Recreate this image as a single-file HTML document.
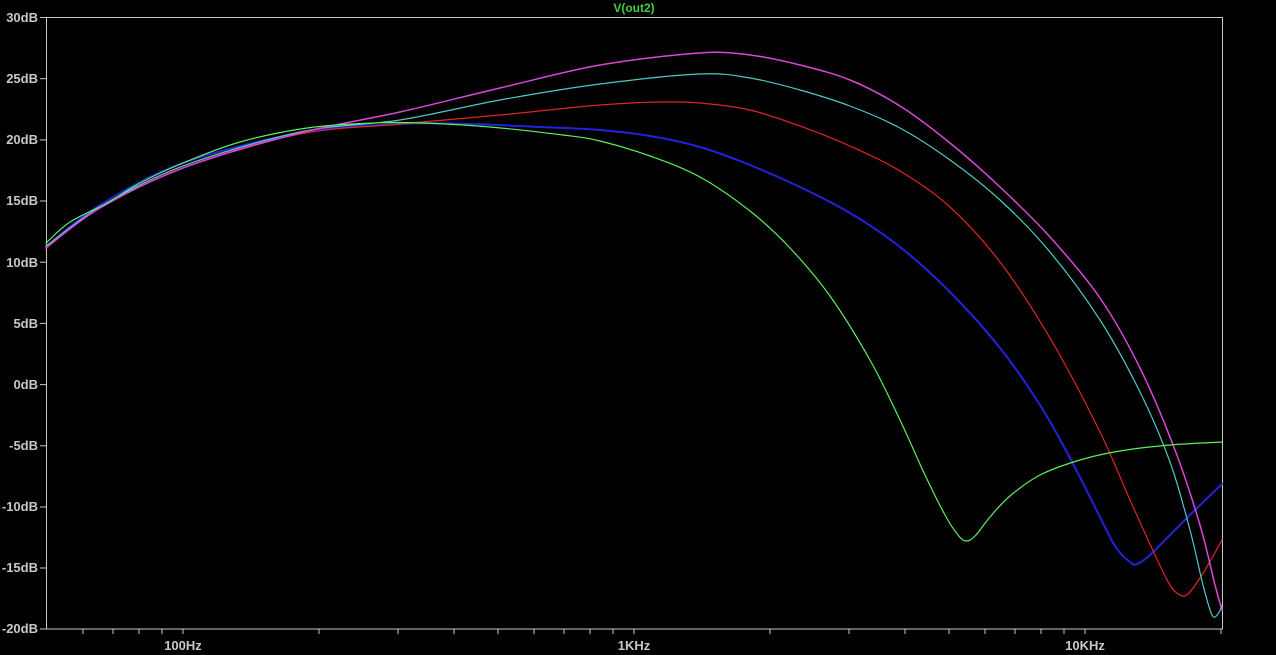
<!DOCTYPE html>
<html><head><meta charset="utf-8"><style>
html,body{margin:0;padding:0;background:#000;}
svg{display:block}
text{font-family:"Liberation Sans",sans-serif;font-size:13px;font-weight:bold;fill:#c8c8c8}
</style></head><body>
<svg id="s" width="1276" height="655" viewBox="0 0 1276 655" xmlns="http://www.w3.org/2000/svg">
<rect width="1276" height="655" fill="#000"/>
<text x="634" y="12" text-anchor="middle" style="fill:#3ecf3e;font-size:12px">V(out2)</text>
<rect x="46.5" y="17.5" width="1176" height="611.5" fill="none" stroke="#c8c8c8" stroke-width="1"/>
<g stroke="#c8c8c8" stroke-width="1">
<line x1="40" y1="17.5" x2="46" y2="17.5"/><line x1="40" y1="78.7" x2="46" y2="78.7"/><line x1="40" y1="139.9" x2="46" y2="139.9"/><line x1="40" y1="201" x2="46" y2="201"/><line x1="40" y1="262.2" x2="46" y2="262.2"/><line x1="40" y1="323.4" x2="46" y2="323.4"/><line x1="40" y1="384.6" x2="46" y2="384.6"/><line x1="40" y1="445.8" x2="46" y2="445.8"/><line x1="40" y1="507" x2="46" y2="507"/><line x1="40" y1="568" x2="46" y2="568"/><line x1="40" y1="629" x2="46" y2="629"/>
<line x1="83" y1="629" x2="83" y2="634"/><line x1="113" y1="629" x2="113" y2="634"/><line x1="139" y1="629" x2="139" y2="634"/><line x1="162" y1="629" x2="162" y2="634"/><line x1="183" y1="629" x2="183" y2="634"/>
<line x1="319" y1="629" x2="319" y2="634"/><line x1="398" y1="629" x2="398" y2="634"/><line x1="454" y1="629" x2="454" y2="634"/><line x1="498" y1="629" x2="498" y2="634"/><line x1="534" y1="629" x2="534" y2="634"/><line x1="564" y1="629" x2="564" y2="634"/><line x1="590" y1="629" x2="590" y2="634"/><line x1="613" y1="629" x2="613" y2="634"/><line x1="634" y1="629" x2="634" y2="634"/>
<line x1="770" y1="629" x2="770" y2="634"/><line x1="849" y1="629" x2="849" y2="634"/><line x1="905" y1="629" x2="905" y2="634"/><line x1="949" y1="629" x2="949" y2="634"/><line x1="985" y1="629" x2="985" y2="634"/><line x1="1015" y1="629" x2="1015" y2="634"/><line x1="1041" y1="629" x2="1041" y2="634"/><line x1="1064" y1="629" x2="1064" y2="634"/><line x1="1085" y1="629" x2="1085" y2="634"/><line x1="1221" y1="629" x2="1221" y2="634"/>
</g>
<g text-anchor="end">
<text x="38" y="22">30dB</text><text x="38" y="83">25dB</text><text x="38" y="144">20dB</text><text x="38" y="205">15dB</text><text x="38" y="267">10dB</text><text x="38" y="328">5dB</text><text x="38" y="389">0dB</text><text x="38" y="450">-5dB</text><text x="38" y="511">-10dB</text><text x="38" y="572">-15dB</text><text x="38" y="633">-20dB</text>
</g>
<g text-anchor="middle">
<text x="183" y="650">100Hz</text><text x="634" y="650">1KHz</text><text x="1085" y="650">10KHz</text>
</g>
<g fill="none" stroke-linejoin="round" stroke-linecap="round">
<polyline stroke="#2222dd" stroke-width="2" points="46,247 100,205 183,163 300,133 400,124 470,124 540,127 600,130 650,136 700,147 750,165 800,187 850,213 900,247 950,292 1000,348 1040,405 1070,458 1095,507 1115,546 1130,562 1137,564 1150,555 1170,535 1195,510 1222,484"/>
<polyline stroke="#e02525" stroke-width="1.2" points="46,247 100,207 183,166 300,134 400,124 500,115 600,105 660,102 700,103 750,110 800,126 850,146 900,171 950,207 1000,262 1050,338 1100,432 1130,500 1155,555 1170,585 1180,595 1188,594 1200,578 1212,558 1222,540"/>
<polyline stroke="#50c8c8" stroke-width="1.2" points="46,246 100,207 183,166 300,132 400,120 500,100 600,84 700,74 750,78 800,90 850,106 900,128 950,160 1000,200 1050,252 1100,320 1140,392 1170,462 1190,530 1203,585 1212,615 1218,614 1222,605"/>
<polyline stroke="#d848d8" stroke-width="1.5" points="46,248 100,208 183,168 300,133 400,112 500,88 600,65 700,53 750,55 800,65 850,80 900,106 950,143 1000,187 1050,237 1100,298 1140,368 1175,450 1200,525 1215,585 1222,610"/>
<polyline stroke="#5cf05c" stroke-width="1.2" points="46,243 70,222 107,203 140,183 183,163 240,142 307,128 373,123 423,123 490,127 563,135 600,141 650,156 700,177 750,211 790,248 830,296 870,360 900,420 925,475 945,515 958,535 966,541 975,536 990,517 1010,496 1040,475 1080,460 1120,451 1170,445 1222,442"/>
</g>
</svg>
<script>
document.querySelectorAll('polyline').forEach(function(pl){
  var p=pl.getAttribute('points').trim().split(/\s+/).map(function(s){return s.split(',').map(Number);});
  var d='M'+p[0][0]+','+p[0][1];
  for(var i=0;i<p.length-1;i++){
    var p0=p[i-1]||p[i],p1=p[i],p2=p[i+1],p3=p[i+2]||p2;
    var c1=[p1[0]+(p2[0]-p0[0])/6,p1[1]+(p2[1]-p0[1])/6];
    var c2=[p2[0]-(p3[0]-p1[0])/6,p2[1]-(p3[1]-p1[1])/6];
    d+=' C'+c1[0].toFixed(1)+','+c1[1].toFixed(1)+' '+c2[0].toFixed(1)+','+c2[1].toFixed(1)+' '+p2[0]+','+p2[1];
  }
  var path=document.createElementNS('http://www.w3.org/2000/svg','path');
  path.setAttribute('d',d);
  path.setAttribute('stroke',pl.getAttribute('stroke'));
  path.setAttribute('stroke-width',pl.getAttribute('stroke-width'));
  pl.parentNode.replaceChild(path,pl);
});
</script>
</body></html>
